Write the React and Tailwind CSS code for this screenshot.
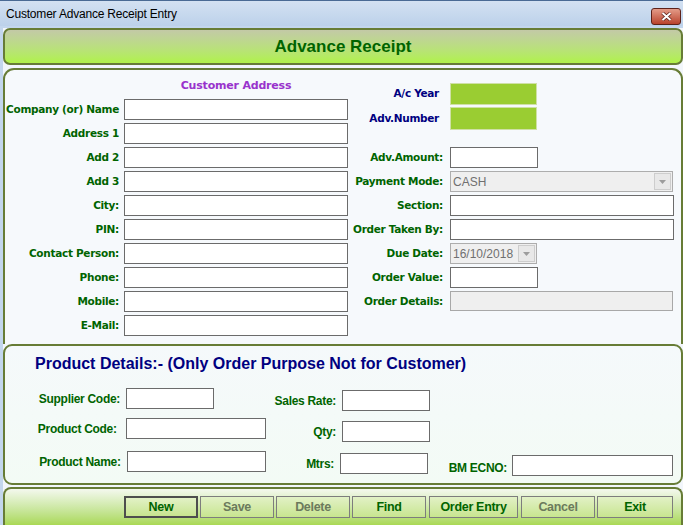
import React from "react";

const leftRows = [
  "Company (or) Name",
  "Address 1",
  "Add 2",
  "Add 3",
  "City:",
  "PIN:",
  "Contact Person:",
  "Phone:",
  "Mobile:",
  "E-Mail:",
];

function Label({ children, navy, className = "" }) {
  return (
    <div
      className={`flex items-center justify-end whitespace-nowrap font-['DejaVu_Sans',sans-serif] text-[10.5px] font-bold tracking-[-0.3px] ${
        navy ? "text-[#000080]" : "text-[#006400]"
      } ${className}`}
    >
      {children}
    </div>
  );
}

function Box({ className = "" }) {
  return <div className={`border border-[#6b6b6b] bg-white ${className}`} />;
}

function Combo({ value, className = "" }) {
  return (
    <div className={`flex h-[21px] items-center border border-[#adadad] bg-[#efefef] pl-[2px] ${className}`}>
      <span className="flex-1 font-['Liberation_Sans',sans-serif] text-[12px] text-[#707070]">{value}</span>
      <div className="mr-[1px] flex h-[17px] w-[17px] items-center justify-center border border-[#cdcdcd] bg-[#e8e8e8]">
        <svg width="7" height="4" viewBox="0 0 7 4">
          <path d="M0 0h7L3.5 4z" fill="#9c9c9c" />
        </svg>
      </div>
    </div>
  );
}

function PLabel({ children, className = "" }) {
  return (
    <div
      className={`flex items-center justify-end whitespace-nowrap font-['Liberation_Sans',sans-serif] text-[12px] font-bold tracking-[-0.3px] text-[#006400] ${className}`}
    >
      {children}
    </div>
  );
}

function Btn({ children, on, strong }) {
  return (
    <button
      className={`flex h-[22px] items-center justify-center bg-linear-to-b from-[#e2f1c6] to-[#c8e58f] font-['Liberation_Sans',sans-serif] text-[12.5px] font-bold tracking-[-0.3px] ${
        strong ? "border-2 border-[#4e4e4e]" : "border border-[#7d7d7d]"
      } ${on ? "text-[#006400]" : "text-[#6b7a5c]"}`}
    >
      {children}
    </button>
  );
}

export default function App() {
  return (
    <div className="h-[525px] w-[683px] overflow-hidden bg-[#c3d6ed] pl-[3px]">
      {/* title bar */}
      <div className="-ml-[3px] flex h-[26px] items-start justify-between border-t border-[#4a6a94] bg-linear-to-b from-[#d3e1f2] to-[#bcd1ea] pr-[2px]">
        <span className="pl-[6px] pt-[6px] font-['Liberation_Sans',sans-serif] text-[12px] leading-[14px] tracking-[-0.2px] text-black">
          Customer Advance Receipt Entry
        </span>
        <div className="mt-[7px] flex h-[17px] w-[30px] items-center justify-center rounded-[3px] border border-[#5e2219] bg-linear-to-b from-[#e39b88] to-[#b8412c]">
          <svg width="11" height="9" viewBox="0 0 11 9">
            <path d="M1.5 1l8 7M9.5 1l-8 7" stroke="#5a1f18" strokeWidth="3.4" />
            <path d="M1.5 1l8 7M9.5 1l-8 7" stroke="#fff" strokeWidth="2" />
          </svg>
        </div>
      </div>

      <div className="bg-[#f2f6fb]">
        {/* header */}
        <div className="mt-[2px] flex h-[37px] items-center justify-center rounded-[7px] border-2 border-[#677c36] bg-linear-to-b from-[#c3c9a6] to-[#b0f247]">
          <span className="font-['Liberation_Sans',sans-serif] text-[17px] font-bold text-[#006400]">
            Advance Receipt
          </span>
        </div>

        {/* customer / receipt panel */}
        <div className="mt-[3px] flex h-[276px] rounded-t-[11px] border-2 border-b-0 border-[#677c36] bg-[#f6f9fc]">
          <div className="w-[343px] pt-[5px]">
            <div className="flex h-[22px] items-center pl-[119px]">
              <span className="w-[224px] text-center font-['DejaVu_Sans',sans-serif] text-[11px] font-bold tracking-[-0.2px] text-[#9933cc]">
                Customer Address
              </span>
            </div>
            <div className="mt-[2px] flex flex-col gap-[3px]">
              {leftRows.map((r) => (
                <div key={r} className="flex h-[21px] gap-[5px]">
                  <Label className="w-[114px]">{r}</Label>
                  <Box className="h-[21px] w-[224px]" />
                </div>
              ))}
            </div>
          </div>

          <div className="flex flex-col pt-[13px]">
            <div className="flex h-[22px] gap-[7px]">
              <Label navy className="w-[95px] pr-[4px]">A/c Year</Label>
              <div className="w-[87px] border border-[#cfe0a6] bg-[#9acd32]" />
            </div>
            <div className="mt-[2px] flex h-[23px] gap-[7px]">
              <Label navy className="w-[95px] pr-[4px]">Adv.Number</Label>
              <div className="w-[87px] border border-[#cfe0a6] bg-[#9acd32]" />
            </div>
            <div className="mt-[17px] flex flex-col gap-[3px]">
              <div className="flex h-[21px] gap-[7px]">
                <Label className="w-[95px]">Adv.Amount:</Label>
                <Box className="w-[88px]" />
              </div>
              <div className="flex h-[21px] gap-[7px]">
                <Label className="w-[95px]">Payment Mode:</Label>
                <Combo value="CASH" className="w-[223px]" />
              </div>
              <div className="flex h-[21px] gap-[7px]">
                <Label className="w-[95px]">Section:</Label>
                <Box className="w-[224px]" />
              </div>
              <div className="flex h-[21px] gap-[7px]">
                <Label className="w-[95px]">Order Taken By:</Label>
                <Box className="w-[224px]" />
              </div>
              <div className="flex h-[21px] gap-[7px]">
                <Label className="w-[95px]">Due Date:</Label>
                <Combo value="16/10/2018" className="w-[87px]" />
              </div>
              <div className="flex h-[21px] gap-[7px]">
                <Label className="w-[95px]">Order Value:</Label>
                <Box className="w-[88px]" />
              </div>
              <div className="flex h-[21px] gap-[7px]">
                <Label className="w-[95px]">Order Details:</Label>
                <div className="h-[20px] w-[223px] border border-[#a8a8a8] bg-[#efefef]" />
              </div>
            </div>
          </div>
        </div>

        {/* product panel */}
        <div className="h-[141px] rounded-[9px] border-2 border-[#677c36] bg-linear-to-b from-[#f5f9fb] to-[#f3fbf5] pl-[30px] pt-[8px]">
          <div className="flex h-[20px] items-center font-['Liberation_Sans',sans-serif] text-[16px] font-bold text-[#000080]">
            Product Details:- (Only Order Purpose Not for Customer)
          </div>

          <div className="mt-[14px] flex items-start">
            <div className="flex w-[231px] gap-[6px]">
              <PLabel className="w-[85px]">Supplier Code:</PLabel>
              <Box className="h-[21px] w-[88px]" />
            </div>
            <div className="mt-[2px] flex gap-[6px]">
              <PLabel className="w-[70px]">Sales Rate:</PLabel>
              <Box className="h-[21px] w-[88px]" />
            </div>
          </div>

          <div className="mt-[7px] flex items-start">
            <div className="flex w-[231px] gap-[6px]">
              <PLabel className="w-[85px] pr-[3px]">Product Code:</PLabel>
              <Box className="h-[21px] w-[141px]" />
            </div>
            <div className="mt-[3px] flex gap-[6px]">
              <PLabel className="w-[70px]">Qty:</PLabel>
              <Box className="h-[21px] w-[88px]" />
            </div>
          </div>

          <div className="mt-[9px] flex items-start">
            <div className="flex w-[231px] gap-[6px]">
              <PLabel className="w-[86px]">Product Name:</PLabel>
              <Box className="h-[21px] w-[140px]" />
            </div>
            <div className="mt-[2px] flex w-[163px] gap-[6px]">
              <PLabel className="w-[68px]">Mtrs:</PLabel>
              <Box className="h-[21px] w-[88px]" />
            </div>
            <div className="mt-[4px] flex gap-[5px]">
              <PLabel className="w-[78px] pt-[4px]">BM ECNO:</PLabel>
              <Box className="h-[21px] w-[161px]" />
            </div>
          </div>
        </div>

        {/* buttons */}
        <div className="mt-[2px] h-[40px] rounded-t-[8px] border-2 border-b-0 border-[#677c36] bg-linear-to-b from-[#f4f8ee] to-[#a6d648] pl-[119px] pt-[7px]">
          <div className="flex">
            <div className="grid grid-cols-[74px_74px_74px_74px] gap-[2px]">
              <Btn on strong>New</Btn>
              <Btn>Save</Btn>
              <Btn>Delete</Btn>
              <Btn on>Find</Btn>
            </div>
            <div className="ml-[3px] grid w-[89px]">
              <Btn on>Order Entry</Btn>
            </div>
            <div className="ml-[3px] grid grid-cols-[74px_76px] gap-[2px]">
              <Btn>Cancel</Btn>
              <Btn on>Exit</Btn>
            </div>
          </div>
        </div>
      </div>
    </div>
  );
}
